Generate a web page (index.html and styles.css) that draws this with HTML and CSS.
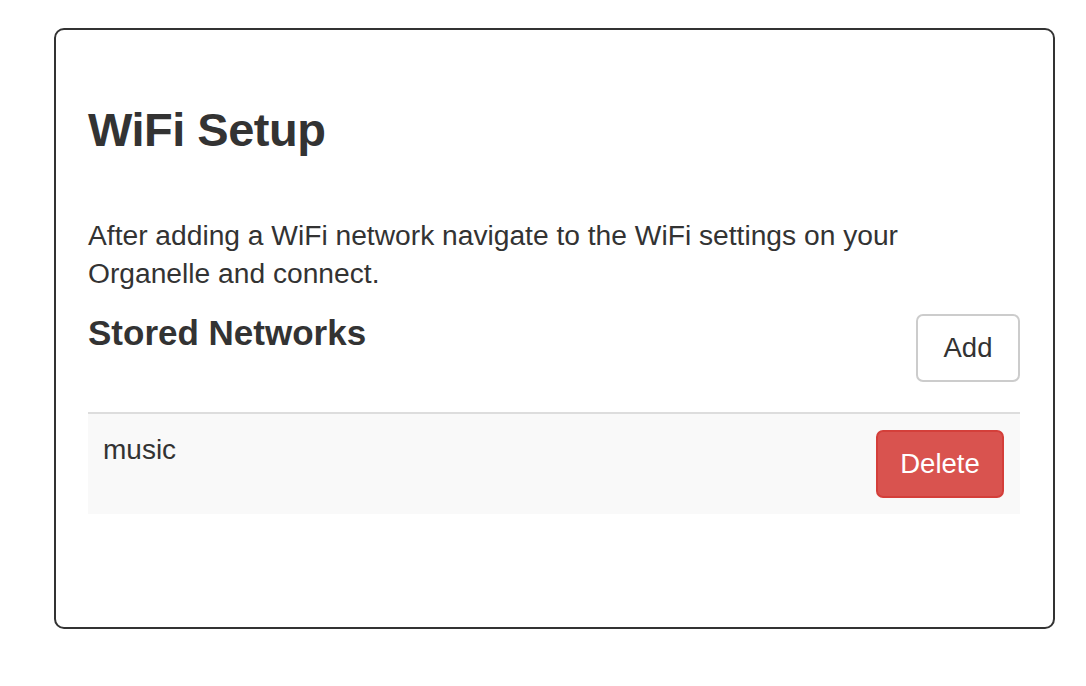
FILE: index.html
```html
<!DOCTYPE html>
<html>
<head>
<meta charset="utf-8">
<link rel="stylesheet" href="styles.css">
</head>
<body>
<div class="card">
  <h1 class="title">WiFi Setup</h1>
  <p class="intro">After adding a WiFi network navigate to the WiFi settings on your Organelle and connect.</p>
  <div class="section-head">
    <h2 class="subtitle">Stored Networks</h2>
    <button class="btn btn-default">Add</button>
  </div>
  <div class="network-table">
    <div class="network-row">
      <span class="network-name">music</span>
      <button class="btn btn-danger">Delete</button>
    </div>
  </div>
</div>
</body>
</html>
```
FILE: styles.css
```css
html, body {
  margin: 0;
  padding: 0;
  background: #fff;
}
body {
  font-family: "Liberation Sans", Arial, sans-serif;
  color: #333;
  padding: 28px 0 0 54px;
}
.card {
  box-sizing: border-box;
  width: 1001px;
  height: 601px;
  border: 2px solid #333;
  border-radius: 10px;
  padding: 0 33px 0 32px;
}
.title {
  margin: 72px 0 0 0;
  font-size: 47px;
  font-weight: bold;
  line-height: 56px;
  letter-spacing: -0.5px;
}
.intro {
  margin: 58px 0 0 0;
  font-size: 28.2px;
  line-height: 38px;
}
.section-head {
  display: flex;
  justify-content: space-between;
  align-items: flex-start;
  margin-top: 16px;
}
.subtitle {
  margin: 5px 0 0 0;
  font-size: 35px;
  font-weight: bold;
  line-height: 40px;
}
.btn {
  font-family: "Liberation Sans", Arial, sans-serif;
  font-size: 27.5px;
  border-radius: 7px;
  cursor: pointer;
  box-sizing: border-box;
}
.btn-default {
  margin-top: 6px;
  width: 104px;
  height: 68px;
  background: #fff;
  color: #333;
  border: 2px solid #ccc;
}
.btn-danger {
  width: 128px;
  height: 68px;
  background: #d9534f;
  color: #fff;
  border: 2px solid #d43f3a;
}
.network-table {
  margin-top: 30px;
  border-top: 2px solid #ddd;
}
.network-row {
  background: #f9f9f9;
  display: flex;
  justify-content: space-between;
  align-items: flex-start;
  padding: 16px 16px 16px 15px;
  height: 68px;
}
.network-name {
  font-size: 28px;
  line-height: 38px;
  margin-top: 1px;
}
```
